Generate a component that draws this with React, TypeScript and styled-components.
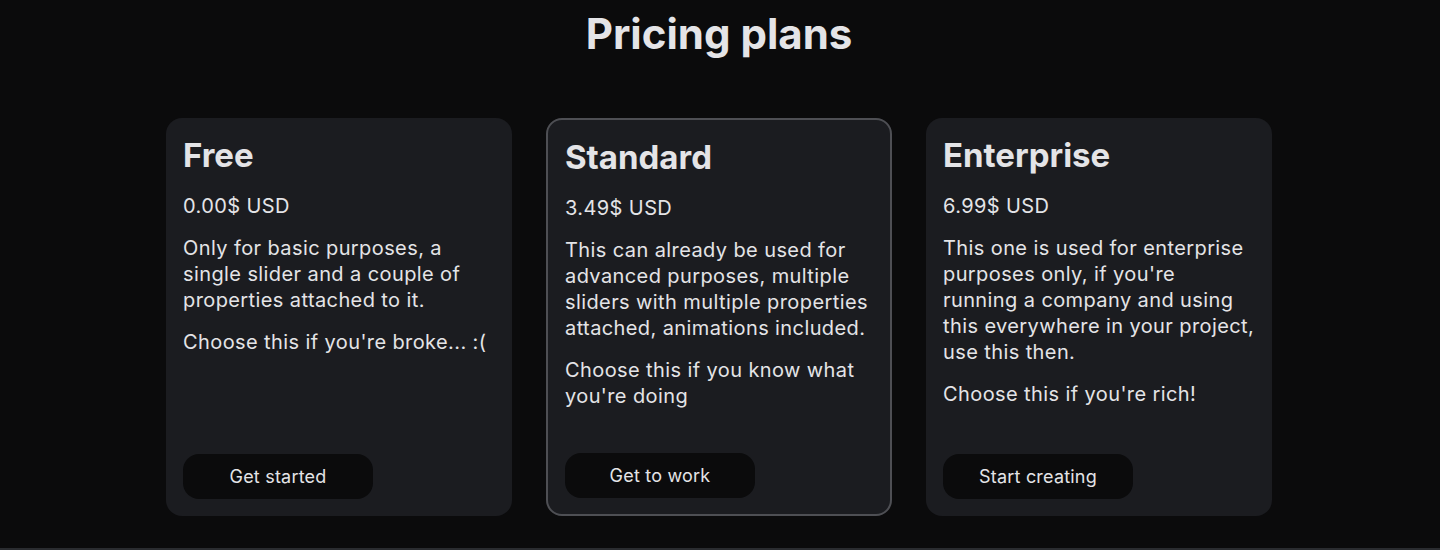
import React, { FC } from "react";
import styled, { createGlobalStyle } from "styled-components";

type Plan = {
  name: string;
  price: string;
  description: string[];
  action: string;
  featured?: boolean;
};

const plans: Plan[] = [
  {
    name: "Free",
    price: "0.00$ USD",
    description: [
      "Only for basic purposes, a single slider and a couple of properties attached to it.",
      "Choose this if you're broke... :(",
    ],
    action: "Get started",
  },
  {
    name: "Standard",
    price: "3.49$ USD",
    description: [
      "This can already be used for advanced purposes, multiple sliders with multiple properties attached, animations included.",
      "Choose this if you know what you're doing",
    ],
    action: "Get to work",
    featured: true,
  },
  {
    name: "Enterprise",
    price: "6.99$ USD",
    description: [
      "This one is used for enterprise purposes only, if you're running a company and using this everywhere in your project, use this then.",
      "Choose this if you're rich!",
    ],
    action: "Start creating",
  },
];

const PlanCard: FC<{ plan: Plan }> = ({ plan }) => (
  <Card $featured={plan.featured}>
    <PlanName>{plan.name}</PlanName>
    <Price>{plan.price}</Price>
    {plan.description.map((text) => (
      <Text key={text}>{text}</Text>
    ))}
    <ActionButton>{plan.action}</ActionButton>
  </Card>
);

const App: FC = () => {
  return (
    <>
      <GlobalStyle />
      <Section>
        <Heading>Pricing plans</Heading>
        <Plans>
          {plans.map((plan) => (
            <PlanCard key={plan.name} plan={plan} />
          ))}
        </Plans>
      </Section>
      <Divider />
    </>
  );
};

const GlobalStyle = createGlobalStyle`
  html, body {
    margin: 0;
    padding: 0;
    background: #0b0b0c;
    color: #e4e4e7;
    font-family: Inter, "Noto Sans", sans-serif;
  }
`;

const Section = styled.section`
  display: flex;
  flex-direction: column;
  align-items: center;
  padding: 9px 2px 32px 0;
`;

const Heading = styled.h1`
  margin: 0 0 59px;
  font-size: 42px;
  line-height: 50px;
  font-weight: 700;
  color: #e4e4e7;
`;

const Plans = styled.div`
  display: grid;
  grid-template-columns: repeat(3, 346px);
  gap: 34px;
`;

const Card = styled.div<{ $featured?: boolean }>`
  box-sizing: border-box;
  height: 398px;
  display: flex;
  flex-direction: column;
  gap: 16px;
  padding: ${({ $featured }) => ($featured ? "17px 16px 16px 17px" : "16px")};
  border-radius: 16px;
  background: #1b1c20;
  border: ${({ $featured }) =>
    $featured ? "2px solid #4e4f54" : "1px solid transparent"};
`;

const PlanName = styled.h2`
  margin: 0 0 2px;
  font-size: 33px;
  line-height: 40px;
  font-weight: 700;
`;

const Price = styled.p`
  margin: 0;
  font-size: 20px;
  line-height: 26px;
  letter-spacing: 0.4px;
`;

const Text = styled.p`
  margin: 0;
  font-size: 20px;
  line-height: 26px;
  letter-spacing: 0.4px;
`;

const ActionButton = styled.button`
  margin-top: auto;
  width: 190px;
  height: 45px;
  border: none;
  border-radius: 16px;
  background: #0b0b0c;
  color: #e4e4e7;
  font-family: inherit;
  font-size: 18px;
  letter-spacing: 0.2px;
  cursor: pointer;
`;

const Divider = styled.div`
  height: 2px;
  background: #2a2c30;
`;

export default App;
